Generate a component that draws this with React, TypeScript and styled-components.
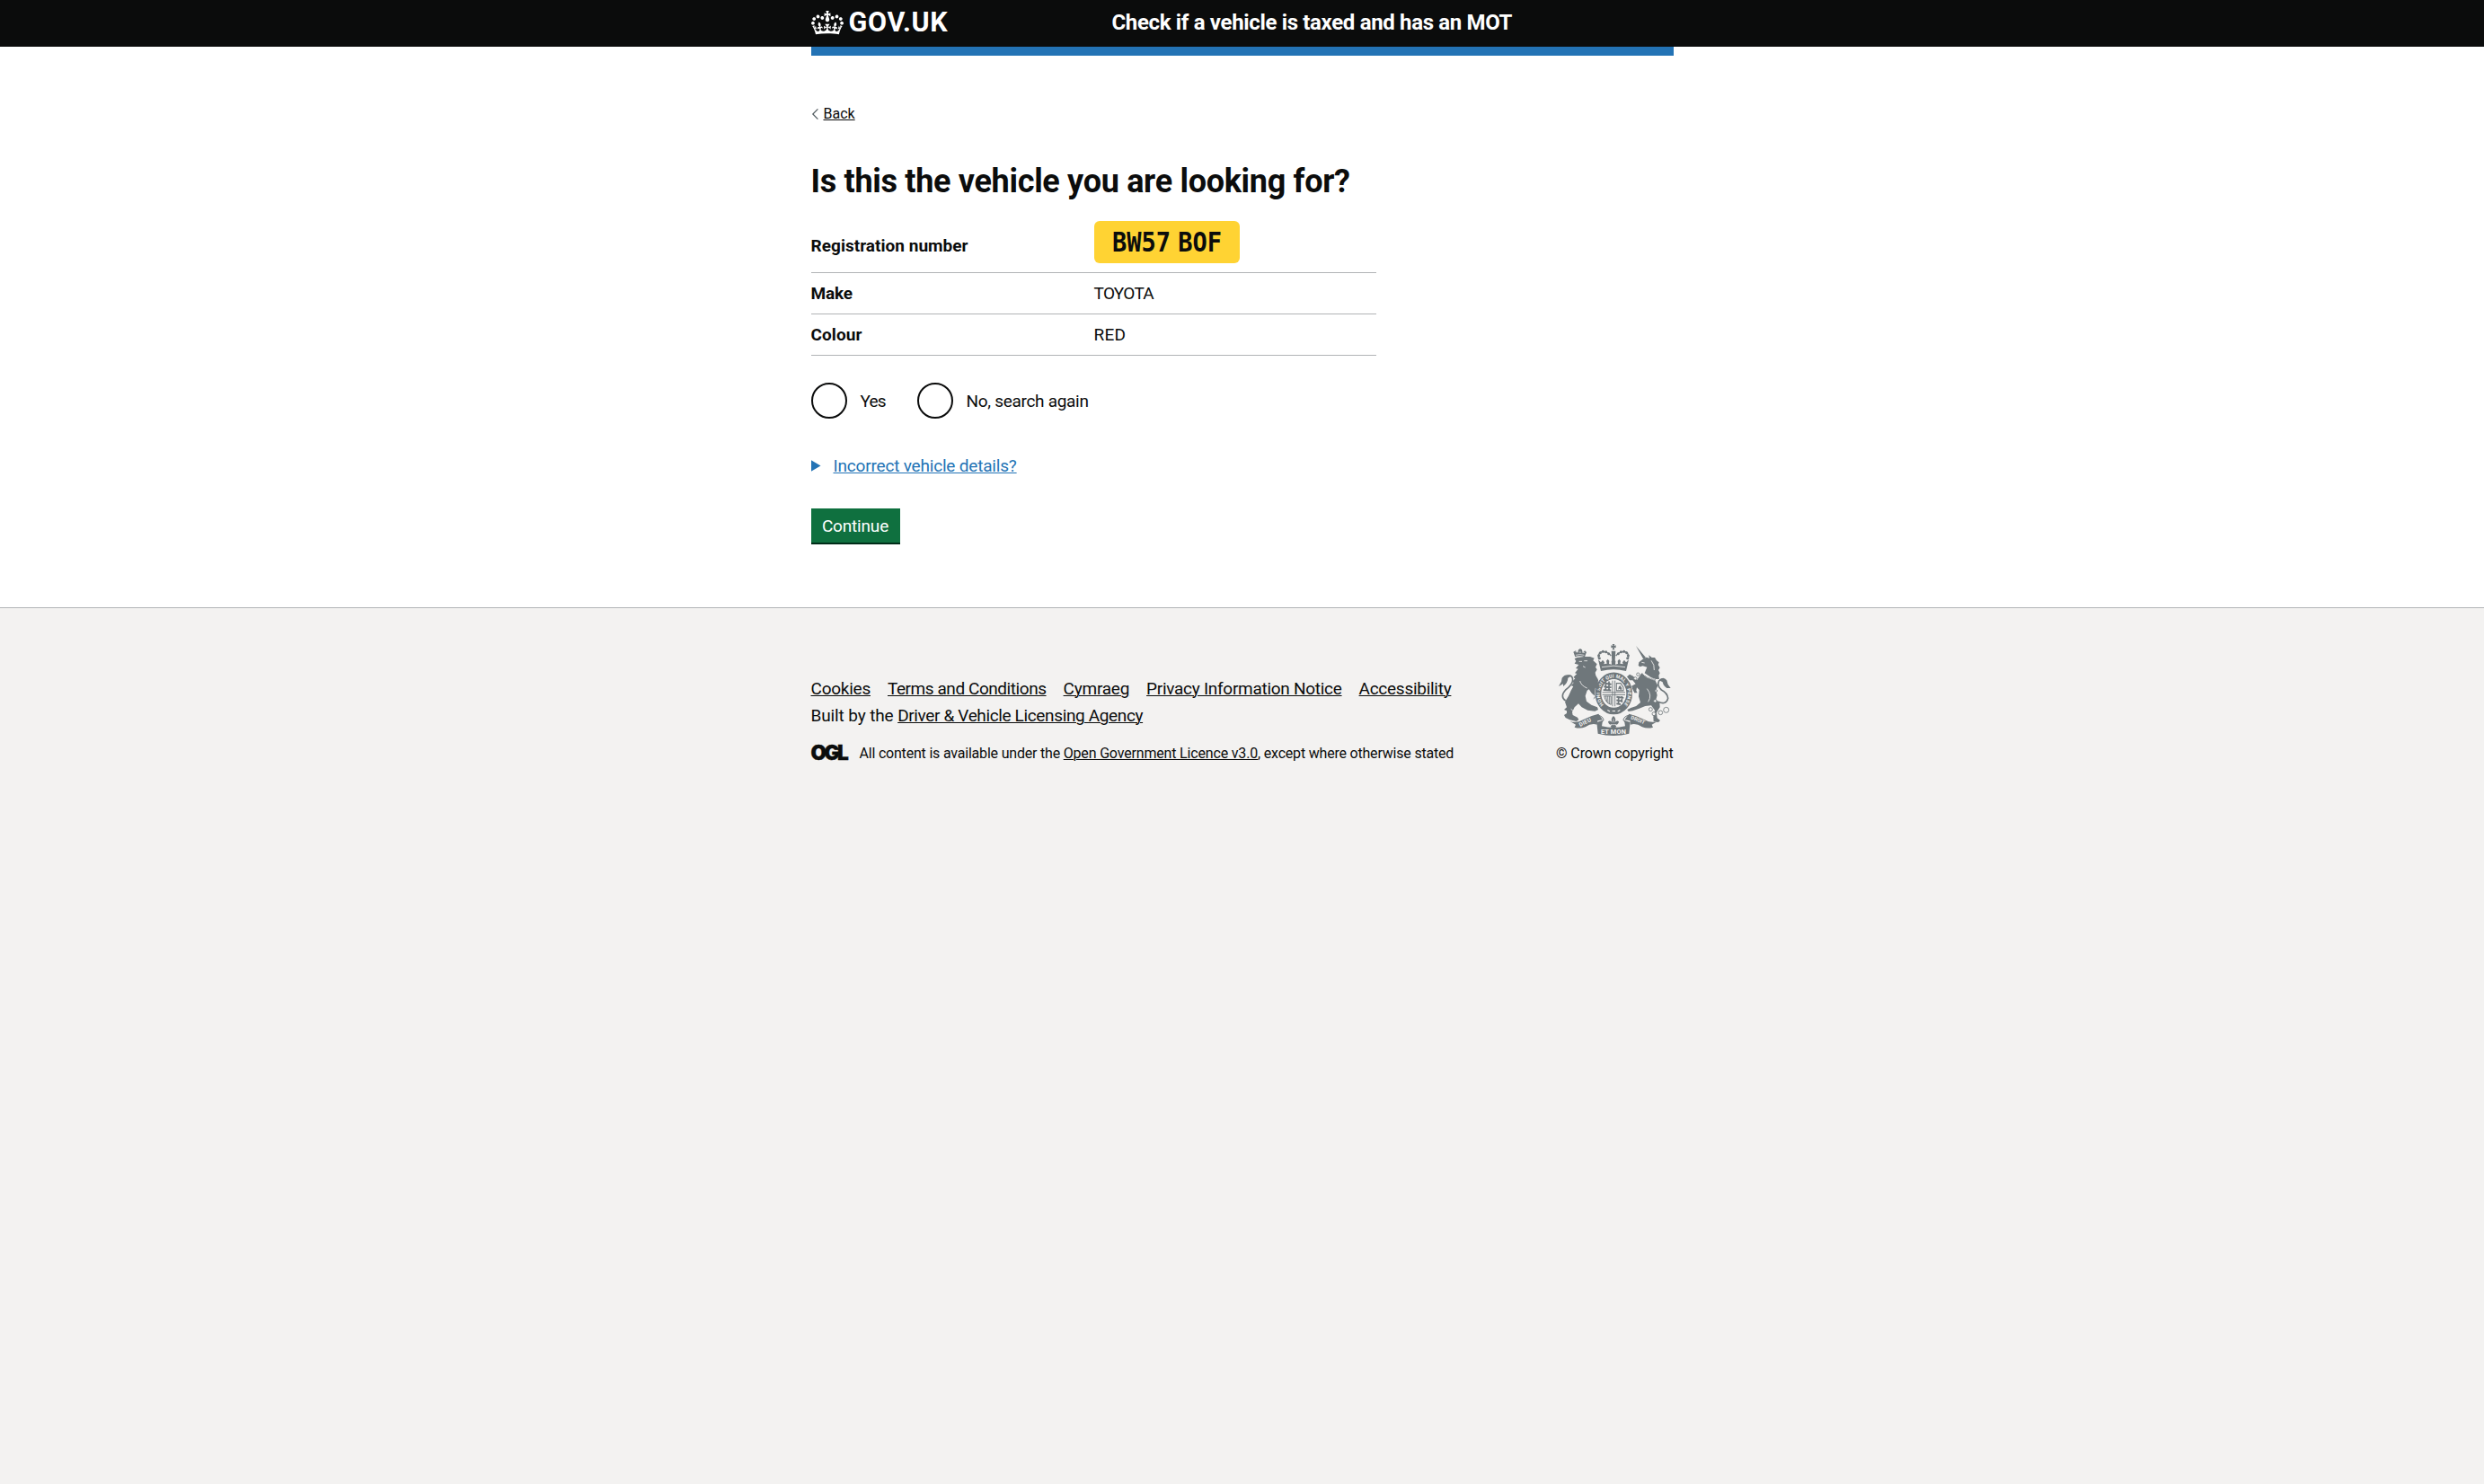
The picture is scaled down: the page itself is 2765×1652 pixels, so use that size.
import React from 'react';
import styled, { createGlobalStyle } from 'styled-components';

const GlobalStyle = createGlobalStyle`
  html, body { margin: 0; background: #f3f2f1; }
  body {
    font-family: Roboto, "Liberation Sans", sans-serif;
    font-size: 19px;
    line-height: 25px;
    color: #0b0c0c;
  }
`;

const Page = styled.div`
  background: #fff;
`;

const Container = styled.div`
  width: 960px;
  margin: 0 auto;
`;

const Header = styled.header`
  height: 52px;
  background: #0b0c0c;
  color: #fff;
`;

const HeaderRow = styled(Container)`
  display: grid;
  grid-template-columns: 335px 1fr;
  height: 52px;
`;

const Logo = styled.a`
  display: flex;
  align-items: flex-start;
  gap: 6px;
  padding-top: 12px;
`;

const LogoText = styled.span`
  margin-top: -5px;
  font-size: 30.5px;
  line-height: 36px;
  font-weight: 700;
  letter-spacing: 0.75px;
`;

const ServiceName = styled.div`
  padding-top: 10px;
  font-size: 24px;
  line-height: 30px;
  font-weight: 700;
  letter-spacing: -0.34px;
`;

const BlueBar = styled(Container)`
  height: 10px;
  background: #2373b5;
`;

const Main = styled(Container).attrs({ as: 'main' })`
  padding: 55px 0 72px;
`;

const BackLink = styled.a`
  display: flex;
  align-items: center;
  gap: 6px;
  height: 20px;
  font-size: 16px;
  line-height: 20px;
`;

const Link = styled.a<{ $spacing?: number; $color?: string }>`
  color: ${p => p.$color ?? '#0b0c0c'};
  letter-spacing: ${p => p.$spacing ?? 0}px;
  text-decoration: underline;
  text-decoration-thickness: 1px;
  text-underline-offset: 1px;
`;

const Heading = styled.h1`
  margin: 45px 0 24px;
  font-size: 36px;
  line-height: 40px;
  font-weight: 700;
  letter-spacing: -0.31px;
`;

const Details = styled.dl`
  width: 629px;
  margin: 0;
`;

const Row = styled.div`
  box-sizing: border-box;
  display: grid;
  grid-template-columns: 315px 1fr;
  align-items: baseline;
  height: 46px;
  padding-top: 10px;
  border-bottom: 1px solid #b1b4b6;
  &:first-child { height: 58px; padding-top: 0; }
`;

const Key = styled.dt<{ $spacing?: number }>`
  font-weight: 700;
  letter-spacing: ${p => p.$spacing ?? 0}px;
`;

const Value = styled.dd<{ $spacing?: number }>`
  display: flex;
  margin: 0;
  letter-spacing: ${p => p.$spacing ?? 0}px;
`;

const Plate = styled.span`
  width: 142px;
  height: 47px;
  padding-left: 20px;
  border-radius: 6px;
  background: #ffd333;
  font: 700 30px/47px "DejaVu Sans Mono", monospace;
  white-space: nowrap;
`;

const PlateText = styled.span`
  display: inline-block;
  transform: scaleX(0.9);
  transform-origin: left;
  word-spacing: -9px;
`;

const Radios = styled.div`
  display: flex;
  margin-top: 30px;
`;

const Radio = styled.label<{ $width: number; $spacing: number }>`
  display: flex;
  align-items: center;
  gap: 15px;
  width: ${p => p.$width}px;
  letter-spacing: ${p => p.$spacing}px;
  white-space: nowrap;
`;

const RadioCircle = styled.span`
  box-sizing: border-box;
  width: 40px;
  height: 40px;
  flex: none;
  border: 2px solid #0b0c0c;
  border-radius: 50%;
`;

const Disclosure = styled.div`
  display: flex;
  align-items: center;
  gap: 14px;
  height: 25px;
  margin-top: 40px;
`;

const Triangle = styled.span`
  width: 11px;
  height: 13px;
  background: #2373b5;
  clip-path: polygon(0 0, 100% 50%, 0 100%);
`;

const Button = styled.button`
  display: block;
  width: 99px;
  height: 38px;
  margin: 35px 0 0;
  padding: 0;
  border: 0;
  background: #0f703f;
  box-shadow: 0 2px 0 #002d18;
  color: #fff;
  font: inherit;
  letter-spacing: -0.18px;
`;

const Footer = styled.footer`
  min-height: 975px;
  border-top: 1px solid #b1b4b6;
  background: #f3f2f1;
`;

const FooterRow = styled(Container)`
  display: flex;
  justify-content: space-between;
  align-items: flex-end;
  padding-top: 40px;
`;

const Links = styled.nav`
  display: flex;
  gap: 19px;
  height: 30px;
`;

const BuiltBy = styled.div`
  height: 45px;
  letter-spacing: -0.12px;
`;

const Licence = styled.div`
  display: flex;
  font-size: 16px;
  line-height: 20px;
  letter-spacing: -0.2px;
`;

const OglLogo = styled.span`
  width: 54px;
  font: 900 22.5px/18px Inter, sans-serif;
  letter-spacing: -2.4px;
  -webkit-text-stroke: 0.4px #0b0c0c;
`;

const Copyright = styled.div`
  display: flex;
  flex-direction: column;
  align-items: center;
  gap: 10px;
  font-size: 16px;
  line-height: 20px;
  letter-spacing: -0.12px;
`;

const CROWN =
  'M25 30.2c3.5 1.5 7.7-.2 9.1-3.7 1.5-3.6-.2-7.8-3.9-9.2-3.6-1.4-7.6.3-9.1 3.9-1.4 3.5.3 7.5 3.9 9zM9 39.5c3.6 1.5 7.8-.2 9.2-3.7 1.5-3.6-.2-7.8-3.9-9.1-3.6-1.5-7.6.2-9.1 3.8-1.4 3.5.3 7.5 3.8 9zM4.4 57.2c3.5 1.5 7.7-.2 9.1-3.8 1.5-3.6-.2-7.7-3.9-9.1-3.5-1.5-7.6.3-9.1 3.8-1.4 3.5.3 7.6 3.9 9.1zm38.3-21.4c3.5 1.5 7.7-.2 9.1-3.8 1.5-3.6-.2-7.7-3.9-9.1-3.6-1.5-7.6.3-9.1 3.8-1.3 3.6.4 7.7 3.9 9.1zm64.4-5.6c-3.6 1.5-7.8-.2-9.1-3.7-1.5-3.6.2-7.8 3.8-9.2 3.6-1.4 7.7.3 9.2 3.9 1.3 3.5-.4 7.5-3.9 9zm15.9 9.3c-3.6 1.5-7.7-.2-9.1-3.7-1.5-3.6.2-7.8 3.7-9.1 3.6-1.5 7.7.2 9.2 3.8 1.5 3.5-.3 7.5-3.8 9zm4.7 17.7c-3.6 1.5-7.8-.2-9.2-3.8-1.5-3.6.2-7.7 3.9-9.1 3.6-1.5 7.7.3 9.2 3.8 1.3 3.5-.4 7.6-3.9 9.1zM89.3 35.8c-3.6 1.5-7.8-.2-9.2-3.8-1.4-3.6.2-7.7 3.9-9.1 3.6-1.5 7.7.3 9.2 3.8 1.4 3.6-.3 7.7-3.9 9.1zM69.7 17.7l8.9 4.7V9.3l-8.9 2.8c-.2-.3-.5-.6-.9-.9L72.4 0H59.6l3.5 11.2c-.3.3-.6.5-.9.9l-8.8-2.8v13.1l8.8-4.7c.3.3.6.7.9.9l-5 15.4v.1c-.2.8-.4 1.6-.4 2.4 0 4.1 3.1 7.5 7 8.1h.2c.3 0 .7.1 1 .1.4 0 .7 0 1-.1h.2c4-.6 7.1-4.1 7.1-8.1 0-.8-.1-1.7-.4-2.4V34l-5.1-15.4c.4-.2.7-.6 1-.9zM66 92.8c16.9 0 32.8 1.1 47.1 3.2 4-16.9 8.9-26.7 14-33.5l-9.6-3.4c1 4.9 1.1 7.2 0 10.2-1.5-1.4-3-4.3-4.2-8.7L108.6 76c2.8-2 5-3.2 7.5-3.3-4.4 9.4-10 11.9-13.6 11.2-4.3-.8-6.3-4.6-5.6-7.9 1-4.7 5.7-5.9 8-.5 4.3-8.7-3-11.4-7.6-8.8 7.1-7.2 7.9-13.5 2.1-21.1-8 6.1-8.1 12.3-4.5 20.8-4.7-5.4-12.1-2.5-9.5 6.2 3.4-5.2 7.9-2 7.2 3.1-.6 4.3-6.4 7.8-13.5 7.2-10.3-.9-10.9-8-11.2-13.8 2.5-.5 7.1 1.8 11 7.3L80.2 60c-4.1 4.4-8 5.3-12.3 5.4 1.4-4.4 8-11.6 8-11.6H55.5s6.4 7.2 7.9 11.6c-4.2-.1-8-1-12.3-5.4l1.4 16.4c3.9-5.5 8.5-7.7 10.9-7.3-.3 5.8-.9 12.8-11.1 13.8-7.2.6-12.9-2.9-13.5-7.2-.7-5 3.8-8.3 7.1-3.1 2.7-8.7-4.6-11.6-9.4-6.2 3.7-8.5 3.6-14.7-4.6-20.8-5.8 7.6-5 13.9 2.2 21.1-4.7-2.6-11.9.1-7.7 8.8 2.3-5.5 7.1-4.2 8.1.5.7 3.3-1.3 7.1-5.7 7.9-3.5.7-9-1.8-13.5-11.2 2.5.1 4.7 1.3 7.5 3.3l-4.7-15.4c-1.2 4.4-2.7 7.2-4.3 8.7-1.1-3-.9-5.3 0-10.2l-9.5 3.4c5 6.9 9.9 16.7 14 33.5 14.8-2.1 30.8-3.2 47.7-3.2z';

const INK = '#6f777b';
const PAPER = '#f3f2f1';

const beads = [
  [211, 98], [209, 89], [214, 80], [223, 76], [233, 77], [242, 83],
  [305, 98], [307, 89], [302, 80], [293, 76], [283, 77], [274, 83],
];

function Crest() {
  return (
    <svg width="125" height="102" viewBox="75 51 375 306" fill={INK}>
      {/* royal crown */}
      <path d="M254 51h8l-2 6 6-2v9l-6-2 2 8h-8l2-8-6 2v-9l6 2z" />
      <path d="M251 74h14l-2 34h-10z" />
      <path d="M208 98 Q206 76 224 76 Q240 77 250 90 M308 98 Q310 76 292 76 Q276 77 266 90" fill="none" stroke={INK} strokeWidth="4" />
      {beads.map(([x, y]) => <circle key={`${x}-${y}`} cx={x} cy={y} r="4.5" />)}
      <path d="M216 141 L207 103 L216 112 L222 104 L228 112 L226 118 L236 116 L234 107 L239 101 L244 107 L243 117 L252 119 L251 108 L258 102 L265 108 L264 119 L273 117 L272 107 L277 101 L282 107 L280 116 L290 118 L288 112 L294 104 L300 112 L309 103 L300 141 Q258 131 216 141z" />
      <path d="M219 128 Q258 119 297 128" fill="none" stroke={PAPER} strokeWidth="2.5" />
      {/* lion */}
      <path d="M130 94 L124 77 L132 73 L138 80 L141 70 L147 66 L153 70 L155 80 L162 73 L168 78 L162 94 Q146 87 130 94z" />
      <path d="M131 77h8M143 78h7M155 79h7M132 88 Q146 83 160 88" fill="none" stroke={PAPER} strokeWidth="2" />
      <path d="M128 100 L136 96 L160 93 L180 93 L194 98 L190 106 L203 118 L198 128 L203 136 L197 146 L199 156 L206 168 L212 190 L214 206 L208 210 L213 222 L214 236 L205 241 L196 230 L190 236 L196 224 L186 216 L176 202 L170 206 L164 224 L168 242 L184 254 L204 262 L207 270 L196 275 L172 272 L152 262 L141 250 L128 262 L120 278 L122 288 L138 296 L142 304 L134 309 L112 304 L98 297 L93 288 L102 282 L102 274 L93 270 L102 262 L96 244 L108 224 L116 206 L124 192 L116 190 L125 180 L120 176 L130 166 L124 162 L136 150 L129 148 L140 134 L132 132 L142 120 L128 116 L133 108z" />
      <path d="M143 109h10M160 107h11M156 125l8 4M170 198 Q150 190 146 174M116 268l10 8" fill="none" stroke={PAPER} strokeWidth="2.5" />
      <path d="M98 240 Q78 226 98 204 Q130 180 119 160 Q108 150 94 168" fill="none" stroke={INK} strokeWidth="5" />
      <path d="M118 157 Q98 148 86 164 L84 176 L75 192 L90 184 L90 192 Q106 180 106 164z" />
      {/* unicorn */}
      <path d="M333 57 L366 96 L358 101z" />
      <path d="M341 122 L343 112 L355 102 L368 95 L378 98 L376 88 L386 96 L396 96 L402 106 L410 112 L407 120 L413 130 L408 138 L413 148 L409 156 L411 168 L400 168 L384 163 L362 148 L370 128 L356 124 L346 127z" />
      <path d="M352 148 L368 163 L398 174 L406 190 L400 204 L404 222 L400 236 L412 246 L413 262 L402 280 L404 298 L414 306 L408 312 L392 310 L391 294 L396 272 L384 256 L364 258 L344 266 L322 274 L308 276 L304 270 L316 264 L334 258 L348 246 L342 226 L344 204 L336 196 L334 206 L338 214 L328 214 L317 192 L332 184 L322 172 L312 172 L303 160 L312 152 L324 158 L336 172z" />
      <path d="M352 151 Q368 168 400 172" fill="none" stroke={INK} strokeWidth="8" strokeDasharray="3 3" />
      <path d="M352 112l10 2M384 106 Q396 120 394 138M370 200 Q388 222 374 244" fill="none" stroke={PAPER} strokeWidth="2.5" />
      <path d="M408 244 Q434 256 440 232 Q438 214 418 204 Q402 190 410 174 Q424 158 436 184" fill="none" stroke={INK} strokeWidth="5" />
      <path d="M410 172 Q424 156 436 172 L440 186 L449 198 L436 198 Q424 190 422 178z" />
      {/* chain */}
      <g fill={PAPER} stroke={INK} strokeWidth="2.5">
        <circle cx="382" cy="269" r="6" /><circle cx="393" cy="284" r="6" /><circle cx="415" cy="280" r="7" />
        <circle cx="434" cy="271" r="9" /><circle cx="340" cy="152" r="5" /><circle cx="331" cy="166" r="5" />
        <circle cx="400" cy="207" r="4" /><circle cx="397" cy="241" r="5" />
      </g>
      {/* garter with the quartered shield */}
      <g transform="translate(0 -26) scale(1 1.13)">
        <circle cx="259" cy="214" r="63.5" fill={PAPER} />
        <circle cx="259" cy="214" r="52" fill="none" stroke={INK} strokeWidth="20" />
        <path id="garterText" d="M225 247 A47 47 0 1 1 293 247" fill="none" />
        <text fill={PAPER} fontFamily="Roboto, sans-serif" fontWeight="700" fontSize="15">
          <textPath href="#garterText" textLength="218">HONI SOIT QUI MAL Y PENSE</textPath>
        </text>
        <circle cx="259" cy="214" r="40" fill={PAPER} />
        <path d="M255 176v76M263 176v76M221 211h76M221 218h76" stroke={INK} strokeWidth="2.5" />
        <g fill="none" stroke={INK} strokeWidth="5">
          <path d="M229 184l22 3M226 194l25 2M224 204l26 1M232 180v27M243 178v28" />
          <path d="M268 224l24 3M268 234l20 3M268 244l14 2M275 222v26M286 223v18" />
        </g>
        <path d="M268 184h14l9 12v10h-23z" fill="none" stroke={INK} strokeWidth="3" />
        <path d="M273 203l3-9 4-4 6 8-2 7-6-5z" />
        <path d="M227 222h23v25q-18-4-23-25M233 222l3 17M239 222l1 21M245 222v24" fill="none" stroke={INK} strokeWidth="2.5" />
        <path d="M238 263l8 4M272 267l8-4M254 266h10" fill="none" stroke={PAPER} strokeWidth="3" />
      </g>
      <path d="M198 170 L208 180 L212 196 L205 204 L198 196z" />
      {/* plume below the garter */}
      <path d="M258 291 Q270 302 261 314 Q269 304 276 310 Q274 322 264 320 L268 328 L258 333 L248 328 L252 320 Q242 322 240 310 Q247 304 255 314 Q246 302 258 291z" />
      <path d="M258 301v12M249 320h18" stroke={PAPER} strokeWidth="2" />
      {/* motto ribbon */}
      <path d="M113 309 Q136 316 156 304 Q180 290 208 284 L222 304 L205 307 L203 320 Q184 314 164 328 Q146 335 128 329 L132 320z" />
      <path d="M405 309 Q382 316 362 304 Q338 290 310 284 L295 304 L313 307 L315 320 Q334 314 354 328 Q372 335 390 329 L386 320z" />
      <path d="M202 312 L222 306 L219 325 Q258 335 297 325 L294 306 L314 312 L310 350 Q258 364 206 350z" />
      <path d="M206 289 Q222 291 225 304 Q224 311 215 311M310 289 Q294 291 291 304 Q292 311 301 311" fill="none" stroke={INK} strokeWidth="3" />
      <path id="mottoLeft" d="M147 327 Q170 315 205 300" fill="none" />
      <path id="mottoRight" d="M315 301 Q340 308 376 328" fill="none" />
      <g fill={PAPER} fontFamily="Roboto, sans-serif" fontWeight="700">
        <text fontSize="18" letterSpacing="1"><textPath href="#mottoLeft">DIEU</textPath></text>
        <text fontSize="17"><textPath href="#mottoRight">DROIT</textPath></text>
        <text x="258" y="351" fontSize="22" textAnchor="middle" letterSpacing="0.5">ET MON</text>
      </g>
    </svg>
  );
}

export default function App() {
  return (
    <Page>
      <GlobalStyle />
      <Header>
        <HeaderRow>
          <Logo>
            <svg width="36" height="26.5" viewBox="0 0 132 97" fill="#fff"><path d={CROWN} /></svg>
            <LogoText>GOV.UK</LogoText>
          </Logo>
          <ServiceName>Check if a vehicle is taxed and has an MOT</ServiceName>
        </HeaderRow>
      </Header>
      <BlueBar />
      <Main>
        <BackLink>
          <svg width="8" height="12" viewBox="0 0 8 12" fill="none" stroke="#505a5f" strokeWidth="1.2">
            <path d="M7.4 0.4 L1.8 6 L7.4 11.6" />
          </svg>
          <Link>Back</Link>
        </BackLink>
        <Heading>Is this the vehicle you are looking for?</Heading>
        <Details>
          <Row>
            <Key $spacing={0.03}>Registration number</Key>
            <Value><Plate><PlateText>BW57 BOF</PlateText></Plate></Value>
          </Row>
          <Row>
            <Key $spacing={-0.2}>Make</Key>
            <Value $spacing={-0.7}>TOYOTA</Value>
          </Row>
          <Row>
            <Key $spacing={0.08}>Colour</Key>
            <Value $spacing={0.3}>RED</Value>
          </Row>
        </Details>
        <Radios>
          <Radio $width={118} $spacing={-0.8}><RadioCircle />Yes</Radio>
          <Radio $width={200} $spacing={-0.3}><RadioCircle />No, search again</Radio>
        </Radios>
        <Disclosure>
          <Triangle />
          <Link $color="#2373b5" $spacing={-0.19}>Incorrect vehicle details?</Link>
        </Disclosure>
        <Button>Continue</Button>
      </Main>
      <Footer>
        <FooterRow>
          <div>
            <Links>
              <Link $spacing={-0.24}>Cookies</Link>
              <Link $spacing={-0.44}>Terms and Conditions</Link>
              <Link $spacing={-0.24}>Cymraeg</Link>
              <Link $spacing={-0.28}>Privacy Information Notice</Link>
              <Link $spacing={-0.27}>Accessibility</Link>
            </Links>
            <BuiltBy>
              Built by the <Link $spacing={-0.36}>Driver &amp; Vehicle Licensing Agency</Link>
            </BuiltBy>
            <Licence>
              <OglLogo>OGL</OglLogo>
              <span>
                All content is available under the <Link $spacing={-0.17}>Open Government Licence v3.0</Link>, except where otherwise stated
              </span>
            </Licence>
          </div>
          <Copyright>
            <Crest />
            © Crown copyright
          </Copyright>
        </FooterRow>
      </Footer>
    </Page>
  );
}
